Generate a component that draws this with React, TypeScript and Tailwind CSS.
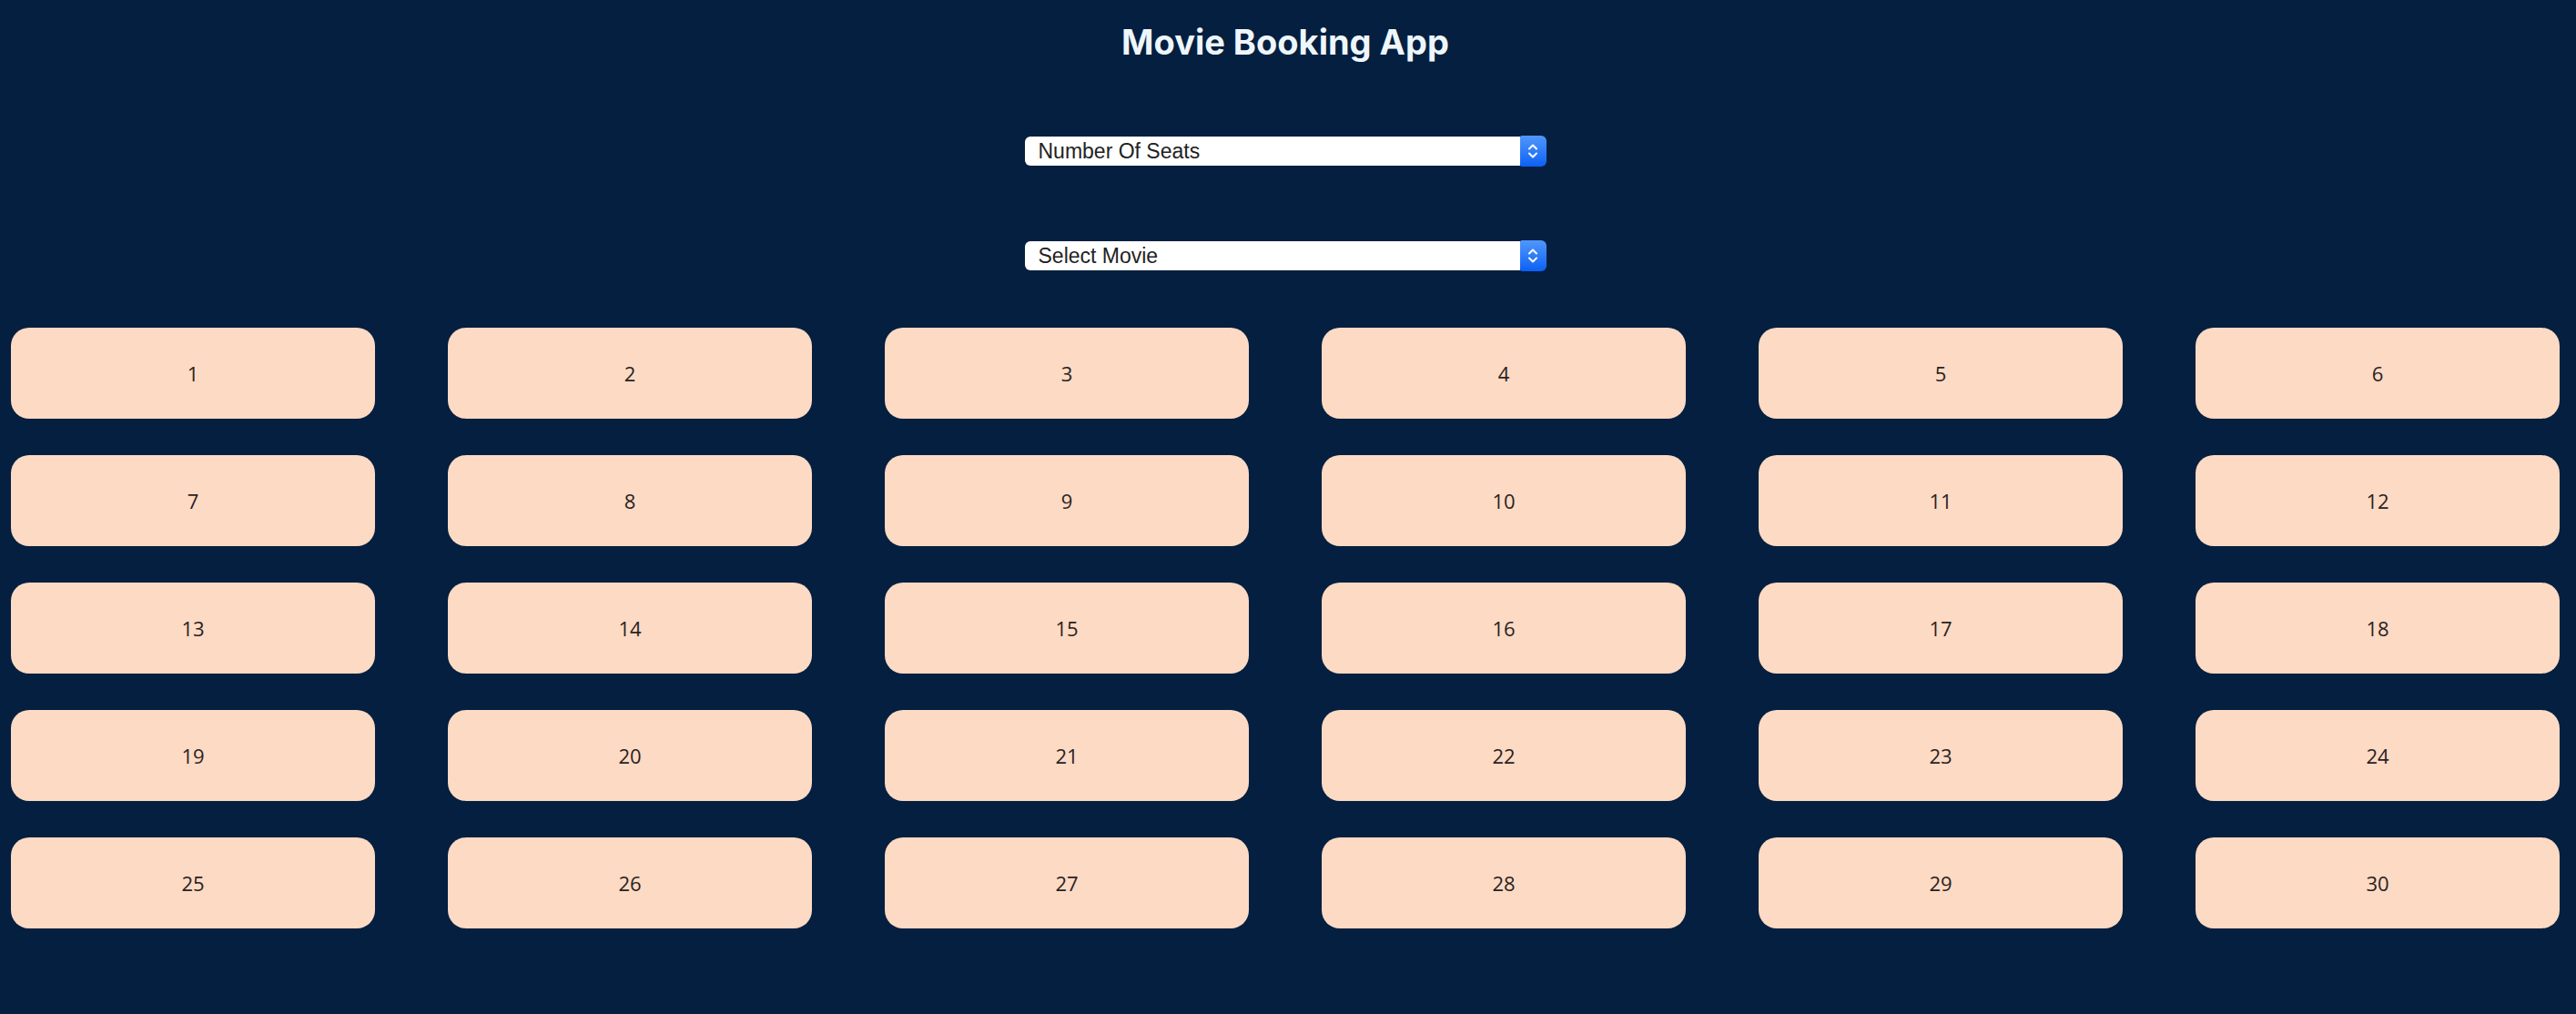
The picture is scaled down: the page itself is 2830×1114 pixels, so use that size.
const seats = Array.from({ length: 30 }, (_, i) => i + 1);

const Stepper = () => (
  <div className="w-[29px] h-[34px] -my-px rounded-r-[6px] rounded-l-[2px] bg-gradient-to-b from-[#4f97fb] to-[#0a5ff5] flex items-center justify-center">
    <svg width="14" height="22" viewBox="0 0 14 22" fill="none">
      <path d="M3 8.5 L7 4.5 L11 8.5" stroke="white" strokeWidth="2" strokeLinecap="round" strokeLinejoin="round" />
      <path d="M3 13.5 L7 17.5 L11 13.5" stroke="white" strokeWidth="2" strokeLinecap="round" strokeLinejoin="round" />
    </svg>
  </div>
);

const SelectBox = ({ label }: { label: string }) => (
  <div className="w-[573px] h-[32px] flex items-center">
    <div className="flex-1 h-full bg-white rounded-l-[6px] flex items-center pl-[15px] text-[23px] text-[#222] font-['Liberation_Sans',sans-serif]">
      {label}
    </div>
    <Stepper />
  </div>
);

export default function App() {
  return (
    <div className="min-h-screen bg-[#041f3f] font-['Inter',sans-serif]">
      <div className="pr-[6px]">
        <h1 className="pt-[23px] text-center text-[38px] leading-[46px] font-bold text-[#eef6fc]">
          Movie Booking App
        </h1>
        <div className="flex flex-col items-center mt-[81px] gap-[83px]">
          <SelectBox label="Number Of Seats" />
          <SelectBox label="Select Movie" />
        </div>
      </div>
      <div className="mt-[63px] pl-[12px] grid grid-cols-[repeat(6,400px)] gap-x-[80px] gap-y-[40px] pb-[94px]">
        {seats.map((n) => (
          <div
            key={n}
            className="h-[100px] rounded-[20px] bg-[#fcdac4] flex items-center justify-center text-[22px] text-[#2a221e] font-['Open_Sans',sans-serif]"
          >
            {n}
          </div>
        ))}
      </div>
    </div>
  );
}
